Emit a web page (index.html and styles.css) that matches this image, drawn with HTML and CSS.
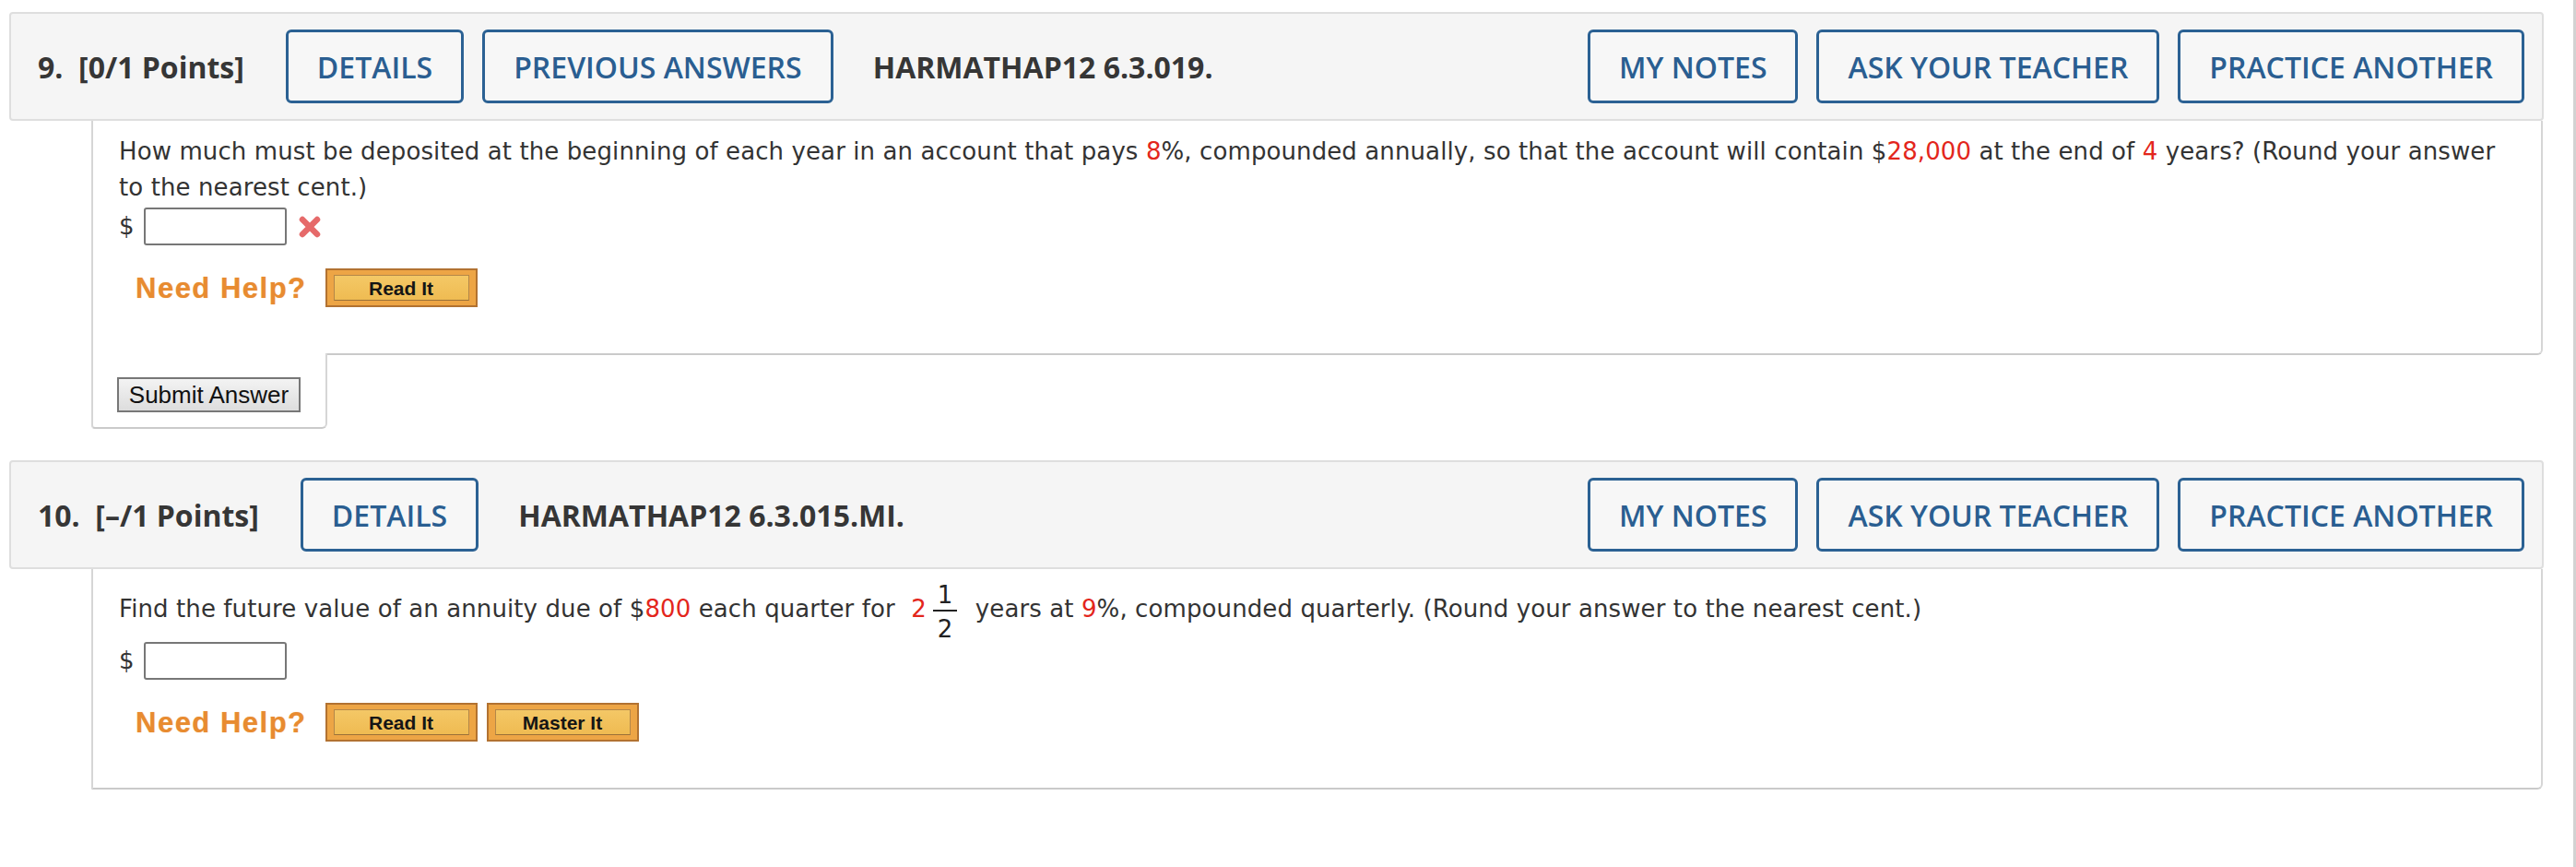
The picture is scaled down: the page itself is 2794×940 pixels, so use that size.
FILE: index.html
```html
<!DOCTYPE html>
<html lang="en">
<head>
<meta charset="utf-8">
<title>WebAssign questions</title>
<link rel="stylesheet" href="styles.css">
</head>
<body>
<div class="page">

  <section class="question">
    <div class="qhead">
      <span class="qnum">9.&nbsp; [0/1 Points]</span>
      <span class="btn">DETAILS</span>
      <span class="btn">PREVIOUS ANSWERS</span>
      <span class="qcode">HARMATHAP12 6.3.019.</span>
      <div class="head-right">
        <span class="btn">MY NOTES</span>
        <span class="btn">ASK YOUR TEACHER</span>
        <span class="btn">PRACTICE ANOTHER</span>
      </div>
    </div>
    <div class="qbody">
      <p class="qtext">How much must be deposited at the beginning of each year in an account that pays <span class="red">8</span>%, compounded annually, so that the account will contain $<span class="red">28,000</span> at the end of <span class="red">4</span> years? (Round your answer to the nearest cent.)</p>
      <div class="answer-row">
        <span class="dollar">$</span>
        <span class="answer-input"></span>
        <svg class="wrong" viewBox="0 0 26 26" width="26" height="26" aria-hidden="true">
          <path d="M5 5 L21 21 M21 5 L5 21" stroke="#e66a6a" stroke-width="6.5" stroke-linecap="round" fill="none"/>
        </svg>
      </div>
      <div class="help-row">
        <span class="need-help">Need Help?</span>
        <span class="help-btn"><span class="help-btn-inner">Read It</span></span>
      </div>
    </div>
    <div class="submit-tab">
      <span class="submit-btn">Submit Answer</span>
    </div>
  </section>

  <section class="question question-next">
    <div class="qhead">
      <span class="qnum">10.&nbsp; [&ndash;/1 Points]</span>
      <span class="btn">DETAILS</span>
      <span class="qcode">HARMATHAP12 6.3.015.MI.</span>
      <div class="head-right">
        <span class="btn">MY NOTES</span>
        <span class="btn">ASK YOUR TEACHER</span>
        <span class="btn">PRACTICE ANOTHER</span>
      </div>
    </div>
    <div class="qbody qbody-frac">
      <p class="qtext">Find the future value of an annuity due of $<span class="red">800</span> each quarter for <span class="red whole">2</span><span class="frac"><span class="num">1</span><span class="den">2</span></span> years at <span class="red">9</span>%, compounded quarterly. (Round your answer to the nearest cent.)</p>
      <div class="answer-row">
        <span class="dollar">$</span>
        <span class="answer-input"></span>
      </div>
      <div class="help-row">
        <span class="need-help">Need Help?</span>
        <span class="help-btn"><span class="help-btn-inner">Read It</span></span>
        <span class="help-btn"><span class="help-btn-inner">Master It</span></span>
      </div>
    </div>
  </section>

</div>
</body>
</html>
```

FILE: styles.css
```css
html, body {
  margin: 0;
  padding: 0;
  background: #ffffff;
}

.page {
  box-sizing: border-box;
  width: 2794px;
  min-height: 940px;
  padding: 13px 0 0 10px;
  border-right: 3px solid #d2d2d2;
}

.question {
  width: 2749px;
}

.question-next {
  margin-top: 34px;
}

/* ---------- header bar ---------- */
.qhead {
  display: flex;
  align-items: center;
  box-sizing: border-box;
  height: 118px;
  padding: 0 19px 0 29px;
  background: #f5f5f5;
  border: 2px solid #dedede;
  border-radius: 4px;
  font-family: "Open Sans", "DejaVu Sans", sans-serif;
  font-size: 32px;
  color: #363636;
}

.qnum {
  font-weight: 700;
  margin-right: 45px;
  white-space: pre;
}

.qcode {
  font-weight: 700;
  margin-left: 43px;
}

.btn {
  display: inline-flex;
  align-items: center;
  box-sizing: border-box;
  height: 80px;
  padding: 0 31px;
  border: 3px solid #2b6193;
  border-radius: 6px;
  background: #f7f7f7;
  color: #2a5e91;
  font-weight: 600;
  white-space: nowrap;
}

.btn + .btn {
  margin-left: 20px;
}

.head-right {
  display: flex;
  margin-left: auto;
}

/* ---------- body ---------- */
.qbody {
  margin: 0 1px 0 89px;
  padding: 14px 28px 50px 28px;
  border: 2px solid #d6d6d6;
  border-top: 0;
  border-bottom-color: #cacaca;
  border-radius: 0 0 6px 0;
  background: #ffffff;
  font-family: "DejaVu Sans", Verdana, sans-serif;
  font-size: 26px;
  line-height: 39px;
  color: #333333;
}

.qbody-frac {
  padding-top: 12px;
}

.qtext {
  margin: 0;
  letter-spacing: 0.1px;
}

.red {
  color: #e3261c;
}

.whole {
  margin-left: 9px;
}

.frac {
  display: inline-block;
  vertical-align: middle;
  margin: 0 11px 0 7px;
  text-align: center;
  color: #222222;
}

.num,
.den {
  display: block;
  line-height: 24px;
  padding: 0 5px;
}

.num {
  padding-top: 4px;
  padding-bottom: 4px;
  border-bottom: 2px solid #222222;
}

.den {
  padding-top: 7px;
}

.answer-row {
  display: flex;
  align-items: center;
  margin-top: 2px;
}

.answer-input {
  box-sizing: border-box;
  width: 155px;
  height: 41px;
  margin-left: 10px;
  border: 2px solid #777777;
  border-radius: 3px;
  background: #ffffff;
}

.wrong {
  margin-left: 12px;
}

.help-row {
  display: flex;
  align-items: center;
  margin-top: 25px;
}

.need-help {
  margin: 0 20px 0 18px;
  font-family: "Liberation Sans", Arial, sans-serif;
  font-weight: 700;
  font-size: 31px;
  letter-spacing: 1.5px;
  color: #e88b30;
  text-shadow: 0 0 1px rgba(232, 139, 48, 0.6);
}

.help-btn {
  display: inline-flex;
  box-sizing: border-box;
  width: 165px;
  height: 42px;
  padding: 5px 7px 5px 7px;
  border: 2px solid #b27231;
  background: #eda545;
}

.help-btn + .help-btn {
  margin-left: 10px;
}

.help-btn-inner {
  flex: 1;
  display: flex;
  align-items: center;
  justify-content: center;
  border: 1px solid #b48748;
  border-bottom-color: #9b7038;
  background: linear-gradient(#f4c866, #efbb52);
  font-family: "Liberation Sans", Arial, sans-serif;
  font-weight: 700;
  font-size: 21px;
  color: #151515;
}

/* ---------- submit tab ---------- */
.submit-tab {
  box-sizing: border-box;
  width: 256px;
  margin: -2px 0 0 89px;
  padding: 26px 0 16px 26px;
  border: 2px solid #d6d6d6;
  border-top: 0;
  border-bottom-color: #cacaca;
  border-radius: 0 0 6px 4px;
  background: #ffffff;
}

.submit-btn {
  display: inline-flex;
  align-items: center;
  justify-content: center;
  box-sizing: border-box;
  width: 199px;
  height: 38px;
  border: 2px solid #777777;
  background: linear-gradient(#f3f3f3, #dddddd);
  font-family: "Liberation Sans", Arial, sans-serif;
  font-size: 26px;
  color: #111111;
}
```
